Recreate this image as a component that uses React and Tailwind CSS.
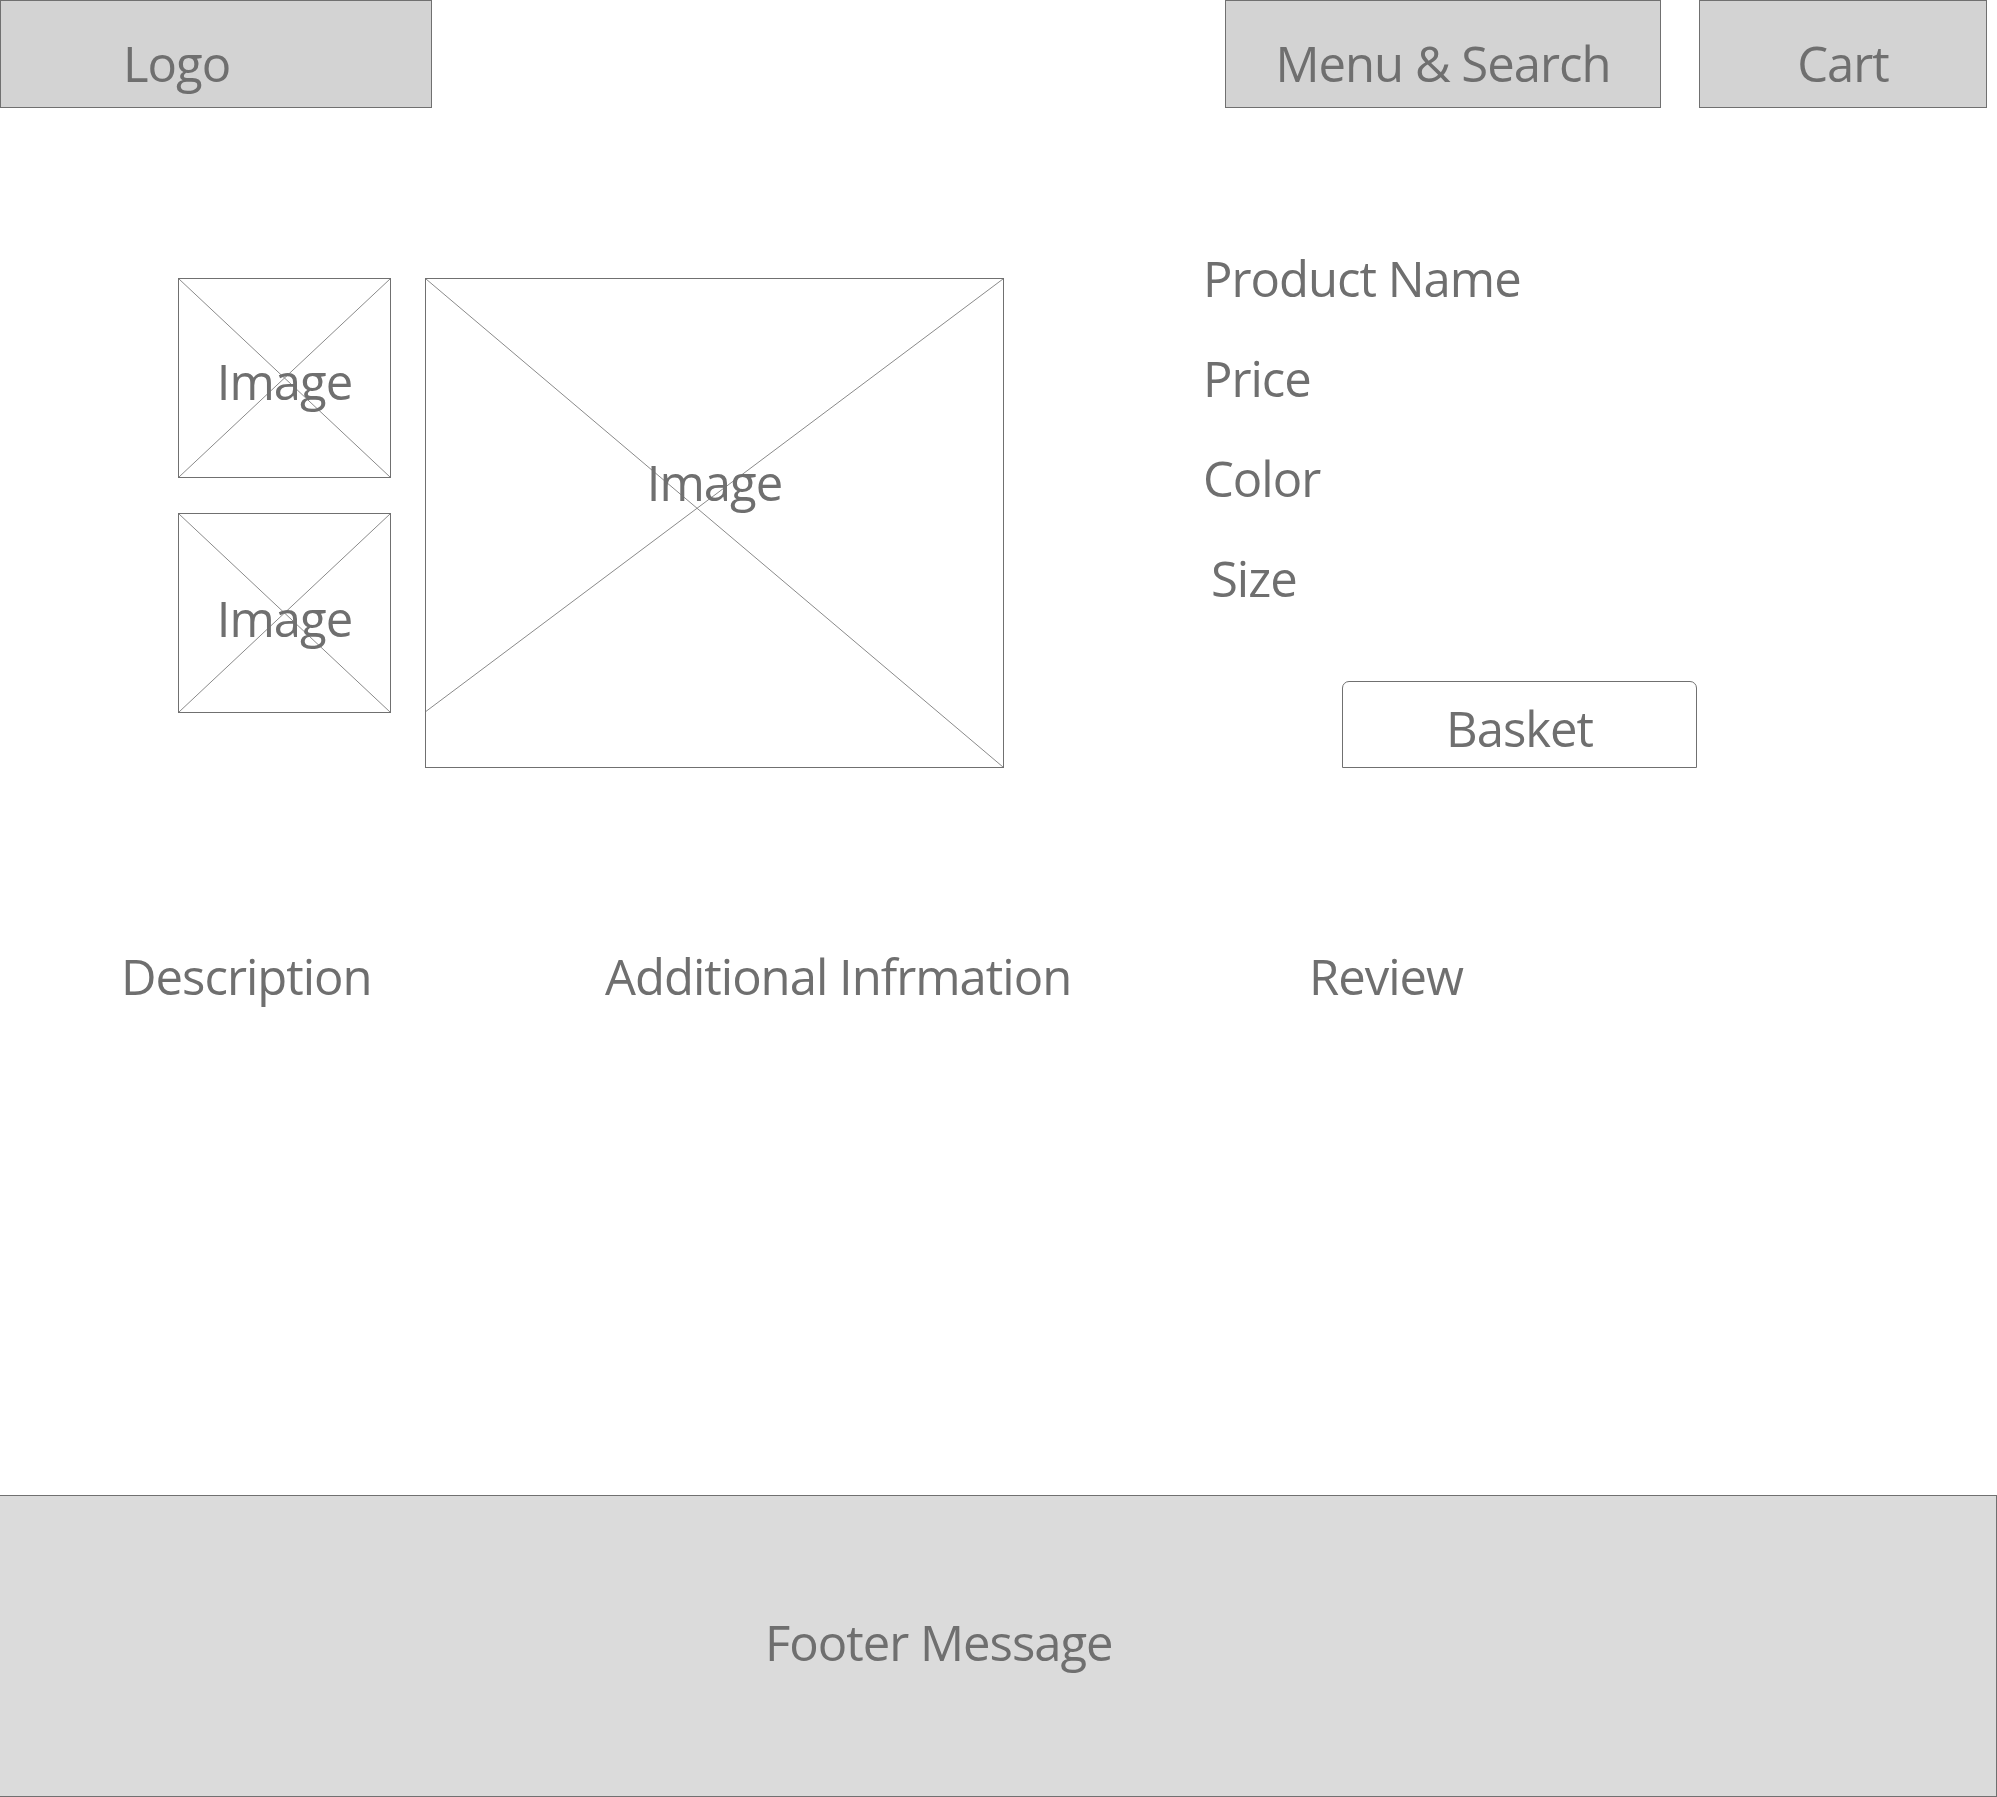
import React from "react";

const font = { fontFamily: '"Open Sans", "Noto Sans", sans-serif' };

function Placeholder({ className, textOffset = "", partial = false }) {
  return (
    <div className={`relative border border-[#707070] bg-white ${className}`}>
      <svg
        className="absolute inset-0 h-full w-full"
        viewBox="0 0 100 100"
        preserveAspectRatio="none"
      >
        <line x1="0" y1="0" x2="100" y2="100" stroke="#8a8a8a" strokeWidth="1" vectorEffect="non-scaling-stroke" />
        <line x1="100" y1="0" x2="0" y2={partial ? 88.6 : 100} stroke="#8a8a8a" strokeWidth="1" vectorEffect="non-scaling-stroke" />
      </svg>
      <div className={`absolute inset-0 flex items-center justify-center ${textOffset}`}>
        <span className="text-[49px] leading-[50px] tracking-[-1px] text-[#6f6f6f]">Image</span>
      </div>
    </div>
  );
}

export default function App() {
  return (
    <div className="flex min-h-[1797px] w-[1997px] flex-col bg-white text-[#6f6f6f]" style={font}>
      {/* Header */}
      <header className="flex h-[108px] items-stretch text-[49px] leading-[50px] tracking-[-1px]">
        <div className="w-[432px] border border-[#707070] bg-[#d3d3d3] pl-[122px] pt-[37px]">
          <span className="block">Logo</span>
        </div>
        <div className="ml-[793px] flex w-[436px] justify-center border border-[#707070] bg-[#d3d3d3] pt-[37px]">
          <span className="block">Menu &amp; Search</span>
        </div>
        <div className="ml-[38px] flex w-[288px] justify-center border border-[#707070] bg-[#d3d3d3] pt-[37px]">
          <span className="block">Cart</span>
        </div>
      </header>

      {/* Product */}
      <section className="mt-[145px] flex items-start pl-[178px]">
        <div className="mt-[25px] flex w-[213px] flex-col gap-[35px]">
          <Placeholder className="h-[200px] w-[213px]" textOffset="pt-[6px]" />
          <Placeholder className="h-[200px] w-[213px]" textOffset="pt-[10px]" />
        </div>
        <Placeholder className="ml-[34px] mt-[25px] h-[490px] w-[579px]" textOffset="pb-[82px]" partial />
        <div className="ml-[199px] flex flex-col">
          <div className="flex flex-col gap-[50px] text-[49px] leading-[50px] tracking-[-1px]">
            <span>Product Name</span>
            <span>Price</span>
            <span>Color</span>
            <span className="pl-[8px]">Size</span>
          </div>
          <button className="ml-[139px] mt-[78px] flex h-[87px] w-[355px] items-center justify-center rounded-t-[7px] border border-[#707070] bg-white pt-[6px] text-[49px] leading-[50px] tracking-[-1px] text-[#6f6f6f]">
            Basket
          </button>
        </div>
      </section>

      {/* Tabs */}
      <nav className="mt-[183px] flex pl-[121px] text-[49px] leading-[50px] tracking-[-1px]">
        <span className="w-[484px]">Description</span>
        <span className="w-[704px]">Additional Infrmation</span>
        <span>Review</span>
      </nav>

      <div className="flex-1" />

      {/* Footer */}
      <footer className="h-[302px] border-y border-r border-[#707070] bg-[#dbdbdb] pl-[765px] pt-[121px]">
        <span className="block text-[49px] leading-[50px] tracking-[-1px]">Footer Message</span>
      </footer>
    </div>
  );
}
